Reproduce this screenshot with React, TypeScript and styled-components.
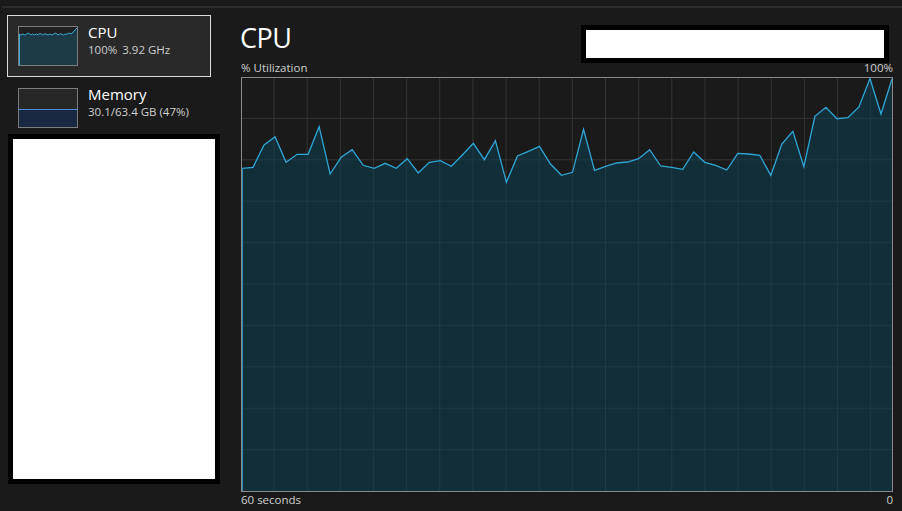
import React from "react";
import styled, { createGlobalStyle } from "styled-components";

const GlobalStyle = createGlobalStyle`
  html, body { margin: 0; padding: 0; background: #1a1a1a; }
  body { font-family: "Segoe UI", "Open Sans", "Noto Sans", sans-serif; }
  * { box-sizing: border-box; }
`;

const Page = styled.div`
  width: 902px;
  height: 511px;
  display: flex;
  flex-direction: column;
  background: #1a1a1a;
  overflow: hidden;
`;

const TopGap = styled.div`
  height: 6px;
`;

const TopRule = styled.div`
  height: 2px;
  margin-left: 2px;
  background: #2d2d2d;
`;

const Body = styled.div`
  flex: 1;
  display: flex;
`;

const Sidebar = styled.nav`
  width: 230px;
  padding: 7px 0 0 7px;
  display: flex;
  flex-direction: column;
`;

const Card = styled.div<{ $selected?: boolean; $bottom: number }>`
  width: 204px;
  display: flex;
  align-items: flex-start;
  gap: 10px;
  padding: 10px 10px ${(p) => p.$bottom}px 10px;
  border: 1px solid ${(p) => (p.$selected ? "#dcdcdc" : "transparent")};
  background: ${(p) => (p.$selected ? "#292929" : "transparent")};
`;

const Thumb = styled.div`
  width: 60px;
  height: 40px;
  border: 1px solid #7c7c7c;
  flex: none;
  display: flex;
`;

const CardText = styled.div`
  display: flex;
  flex-direction: column;
  margin-top: -3px;
`;

const CardTitle = styled.div`
  font-size: 15px;
  line-height: 19px;
  color: #ffffff;
`;

const CardSub = styled.div`
  font-size: 11.5px;
  line-height: 15px;
  color: #cfcfcf;
  display: flex;
  gap: 5px;
  white-space: nowrap;
`;

const Redacted = styled.div<{ $w: number; $h: number }>`
  width: ${(p) => p.$w}px;
  height: ${(p) => p.$h}px;
  background: #ffffff;
  border: 5px solid #000000;
  flex: none;
`;

const SideRedact = styled(Redacted)`
  margin-left: 1px;
`;

const Main = styled.main`
  flex: 1;
  display: flex;
  flex-direction: column;
  padding: 0 9px 0 11px;
`;

const Header = styled.div`
  height: 54px;
  display: flex;
  justify-content: space-between;
  align-items: flex-start;
`;

const Title = styled.h1`
  margin: 14px 0 0 -1px;
  font-size: 27px;
  line-height: 32px;
  font-weight: 400;
  letter-spacing: -0.5px;
  color: #ffffff;
`;

const HeadRedact = styled(Redacted)`
  margin: 17px 4px 0 0;
`;

const LabelRow = styled.div<{ $h: number; $lh: number }>`
  height: ${(p) => p.$h}px;
  display: flex;
  justify-content: space-between;
  align-items: flex-start;
  font-size: 11.5px;
  line-height: ${(p) => p.$lh}px;
  color: #cfcfcf;
`;

const GraphFrame = styled.div`
  width: 652px;
  height: 415px;
  border: 1px solid #8a8a8a;
  display: flex;
`;

const cpu = [
  168.3, 167.3, 145, 136.7, 162.3, 154.3, 154.3, 126.7, 174, 157.3, 149.7, 165.3,
  168.3, 163.3, 168.3, 158.7, 173, 162.3, 160.7, 166.3, 155, 143.3, 159.7, 140.7,
  182.3, 156, 151.3, 146.3, 164, 175.3, 172.3, 129.3, 170.3, 166.3, 163, 162,
  158.7, 149.7, 166, 167.3, 169.3, 152, 162.3, 165.3, 170, 153.3, 154, 155.3,
  175.3, 144, 131.3, 166.7, 116.3, 107.3, 118.7, 117.7, 107, 78.3, 114, 79,
];

const GW = 650;
const GH = 413;

function CpuGraph() {
  const pts = cpu.map((v, i) => [(i * GW) / (cpu.length - 1), Math.max(0.5, v - 78)]);
  const line = pts.map(([x, y]) => `${x.toFixed(2)},${y.toFixed(2)}`).join(" ");
  const area = `0,${GH} ${line} ${GW},${GH}`;
  const vLines = Array.from({ length: 19 }, (_, k) => 32 + 33.15 * k);
  const hLines = Array.from({ length: 9 }, (_, k) => 40.4 + 41.4 * k);
  return (
    <svg width={GW} height={GH} viewBox={`0 0 ${GW} ${GH}`} style={{ display: "block" }}>
      <rect width={GW} height={GH} fill="#1a1a1a" />
      {vLines.map((x) => (
        <line key={`v${x}`} x1={x} x2={x} y1={0} y2={GH} stroke="#343434" strokeWidth={1} />
      ))}
      {hLines.map((y) => (
        <line key={`h${y}`} x1={0} x2={GW} y1={y} y2={y} stroke="#343434" strokeWidth={1} />
      ))}
      <polygon points={area} fill="rgb(9,67,87)" fillOpacity={0.5} />
      <polyline points={line} fill="none" stroke="#2ea6d6" strokeWidth={1.3} strokeLinejoin="miter" />
      <line x1={0.5} x2={0.5} y1={pts[0][1]} y2={GH} stroke="#2a8fb8" strokeWidth={1} />
    </svg>
  );
}

const mini = [7, 8, 7, 8, 7, 6, 8, 7, 8, 7, 8, 6, 8, 7, 7, 8, 7, 8, 7, 6, 8, 7, 7, 8, 7, 7, 6, 7, 5, 3, 1];

function CpuThumb() {
  const w = 58;
  const h = 38;
  const pts = mini.map((v, i) => `${((i * w) / (mini.length - 1)).toFixed(2)},${v}`).join(" ");
  return (
    <svg width={w} height={h} style={{ display: "block" }}>
      <rect width={w} height={h} fill="#1f1f1f" />
      <polygon points={`0,${h} ${pts} ${w},${h}`} fill="#1c3b46" />
      <polyline points={pts} fill="none" stroke="#3aa9d6" strokeWidth={1} />
      <line x1={0.5} x2={0.5} y1={7} y2={h} stroke="#3aa9d6" strokeWidth={1} />
    </svg>
  );
}

function MemThumb() {
  const w = 58;
  const h = 38;
  return (
    <svg width={w} height={h} style={{ display: "block" }}>
      <rect width={w} height={h} fill="#262626" />
      <rect y={20} width={w} height={h - 20} fill="#182841" />
      <line x1={0} x2={w} y1={20.5} y2={20.5} stroke="#4a8fdc" strokeWidth={1} />
    </svg>
  );
}

export default function App() {
  return (
    <Page>
      <GlobalStyle />
      <TopGap />
      <TopRule />
      <Body>
        <Sidebar>
          <Card $selected $bottom={10}>
            <Thumb>
              <CpuThumb />
            </Thumb>
            <CardText>
              <CardTitle>CPU</CardTitle>
              <CardSub>
                <span>100%</span>
                <span>3.92 GHz</span>
              </CardSub>
            </CardText>
          </Card>
          <Card $bottom={5}>
            <Thumb>
              <MemThumb />
            </Thumb>
            <CardText>
              <CardTitle>Memory</CardTitle>
              <CardSub>
                <span>30.1/63.4 GB (47%)</span>
              </CardSub>
            </CardText>
          </Card>
          <SideRedact $w={212} $h={350} />
        </Sidebar>
        <Main>
          <Header>
            <Title>CPU</Title>
            <HeadRedact $w={308} $h={38} />
          </Header>
          <LabelRow $h={15} $lh={11}>
            <span>% Utilization</span>
            <span>100%</span>
          </LabelRow>
          <GraphFrame>
            <CpuGraph />
          </GraphFrame>
          <LabelRow $h={18} $lh={15}>
            <span>60 seconds</span>
            <span>0</span>
          </LabelRow>
        </Main>
      </Body>
    </Page>
  );
}
